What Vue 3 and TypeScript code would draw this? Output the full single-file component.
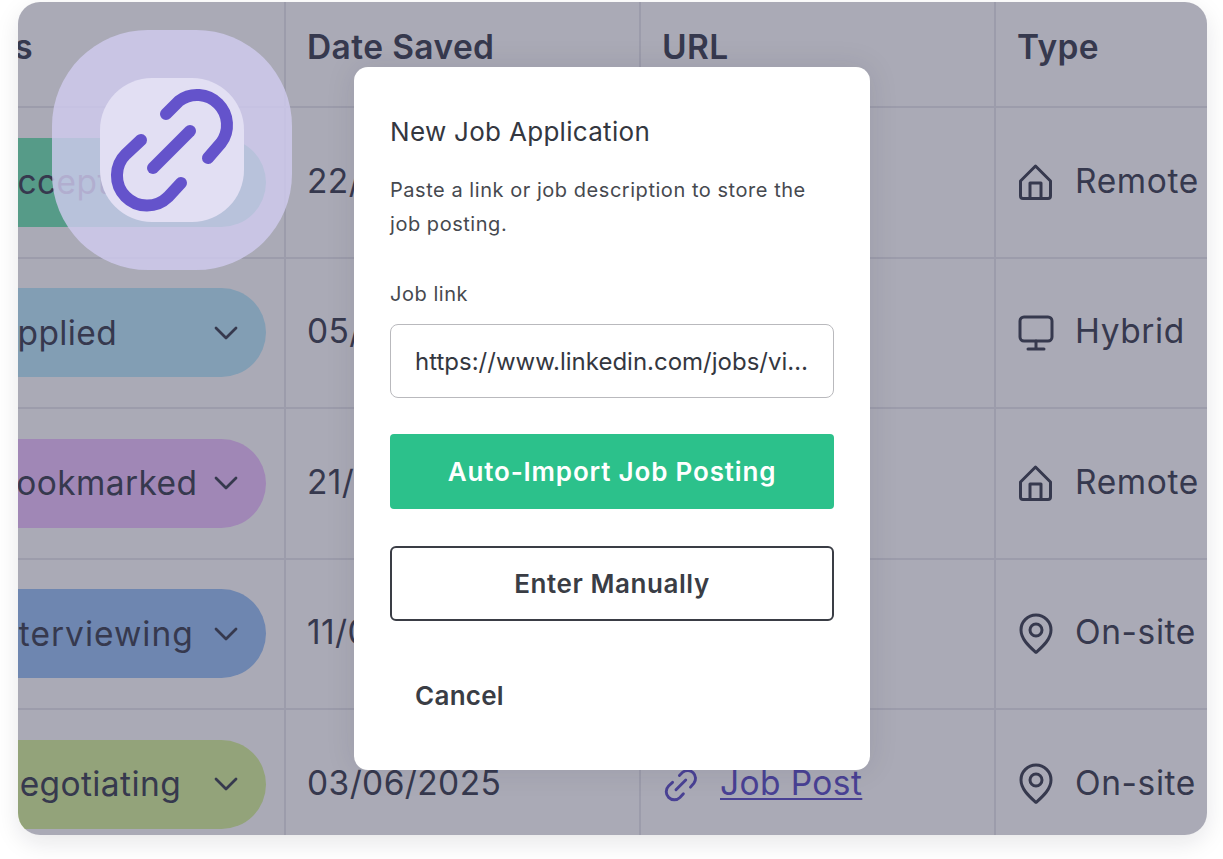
<script setup lang="ts">
type Row = { status: string; cls: string; date: string; kind: string; label: string }

const rows: Row[] = [
  { status: 'Accepted', cls: 'accepted', date: '22/05/2025', kind: 'home', label: 'Remote' },
  { status: 'Applied', cls: 'applied', date: '05/06/2025', kind: 'desk', label: 'Hybrid' },
  { status: 'Bookmarked', cls: 'bookmarked', date: '21/05/2025', kind: 'home', label: 'Remote' },
  { status: 'Interviewing', cls: 'interviewing', date: '11/06/2025', kind: 'pin', label: 'On-site' },
  { status: 'Negotiating', cls: 'negotiating', date: '03/06/2025', kind: 'pin', label: 'On-site' },
]
</script>

<template>
  <div class="page">
    <div class="card">
      <div class="grid">
        <div class="cell head status-head"><span>Status</span></div>
        <div class="cell head">Date Saved</div>
        <div class="cell head">URL</div>
        <div class="cell head last">Type</div>

        <template v-for="row in rows" :key="row.status">
          <div class="cell status-cell">
            <div class="pill" :class="row.cls">
              <span>{{ row.status }}</span>
              <svg class="chev" viewBox="0 0 24 14" fill="none" stroke="currentColor" stroke-width="2.800" stroke-linecap="round" stroke-linejoin="round">
                <path d="M2 2l10 10L22 2" />
              </svg>
            </div>
          </div>
          <div class="cell">{{ row.date }}</div>
          <div class="cell url">
            <svg class="mini-link" viewBox="0 0 144 144" fill="none" stroke="currentColor" stroke-width="11" stroke-linecap="round">
              <path d="M66 36L79 23A30 30 0 0 1 121 65L108 80" />
              <path d="M40 62L25 76A30 30 0 0 0 68 119L81 105" />
              <path d="M53 90L90 53" />
            </svg>
            <a class="job-link">Job Post</a>
          </div>
          <div class="cell last type">
            <svg v-if="row.kind === 'home'" class="type-icon" viewBox="0 0 36 38" fill="none" stroke="currentColor" stroke-width="3" stroke-linejoin="round" stroke-linecap="round">
              <path d="M2.500 18L17.500 3l15 15v15a2.500 2.500 0 0 1-2.500 2.500H5A2.500 2.500 0 0 1 2.500 33z" />
              <path d="M12 35.500V20h11v15.500" />
            </svg>
            <svg v-else-if="row.kind === 'desk'" class="type-icon" viewBox="0 0 36 38" fill="none" stroke="currentColor" stroke-width="3" stroke-linecap="round">
              <rect x="2" y="3" width="32" height="24" rx="4" />
              <path d="M18 27v7M10 35h16" />
            </svg>
            <svg v-else class="type-icon pin" viewBox="0 0 36 42" fill="none" stroke="currentColor" stroke-width="3" stroke-linejoin="round">
              <path d="M18 39.500C12 34 3 26.500 3 17a15 15 0 0 1 30 0c0 9.500-9 17-15 22.500z" />
              <circle cx="18" cy="17" r="6" />
            </svg>
            <span>{{ row.label }}</span>
          </div>
        </template>
      </div>
      <div class="scrim"></div>
    </div>

    <div class="badge">
      <div class="badge-inner">
        <svg viewBox="0 0 144 144" fill="none" stroke="#6453cb" stroke-width="12" stroke-linecap="round">
          <path d="M66 36L79 23A30 30 0 0 1 121 65L108 80" />
          <path d="M41 62L26 76A30 30 0 0 0 68 119L81 105" />
          <path d="M53 90L90 53" />
        </svg>
      </div>
    </div>

    <div class="modal">
      <h2>New Job Application</h2>
      <p class="desc">Paste a link or job description to store the job posting.</p>
      <label class="field-label">Job link</label>
      <div class="input">https://www.linkedin.com/jobs/view/3948210</div>
      <button class="btn primary">Auto-Import Job Posting</button>
      <button class="btn outline">Enter Manually</button>
      <button class="btn cancel">Cancel</button>
    </div>
  </div>
</template>

<style scoped>
.page {
  position: relative;
  width: 1223px;
  height: 859px;
  padding: 2px 16px 24px 18px;
  box-sizing: border-box;
  background: #fff;
  overflow: hidden;
  font-family: Inter, "Liberation Sans", sans-serif;
}

.card {
  position: relative;
  height: 833px;
  border-radius: 22px;
  overflow: hidden;
  background: #fff;
  box-shadow: 0 8px 24px rgba(20, 20, 40, 0.1);
}

.grid {
  display: grid;
  grid-template-columns: 268px 355px 355px 1fr;
  grid-template-rows: 106px repeat(5, 150.500px);
  color: #3f4352;
  font-size: 33.500px;
  letter-spacing: 0.4px;
}

.cell {
  display: flex;
  align-items: center;
  padding-left: 21px;
  padding-bottom: 3px;
  border-right: 2px solid #e8e8ed;
  border-bottom: 2px solid #e8e8ed;
  overflow: hidden;
  white-space: nowrap;
  min-width: 0;
}

.cell.last {
  border-right: none;
  padding-left: 21px;
}

.head {
  font-weight: 600;
  padding-bottom: 14px;
}

.status-head span {
  margin-left: -112px;
}

.status-cell {
  padding: 0;
  justify-content: flex-end;
}

.pill {
  flex: none;
  display: flex;
  align-items: center;
  justify-content: space-between;
  width: 300px;
  height: 89px;
  margin-right: 18px;
  padding: 0 28px 0 28px;
  box-sizing: border-box;
  border-radius: 45px;
}

.accepted { background: #73e6b3; }
.applied { background: #bdebfc; }
.bookmarked { background: #efc5ff; }
.interviewing { background: #9bc3f5; }
.negotiating { background: #d9f49b; }

.interviewing span {
  margin-left: -6px;
  letter-spacing: 1px;
}

.chev {
  width: 24px;
  height: 14px;
}

.url {
  gap: 20px;
}

.mini-link {
  width: 38px;
  height: 38px;
  margin-top: 4px;
  color: #5e50c6;
  flex: none;
}

.job-link {
  color: #5e50c6;
  text-decoration: underline;
  text-underline-offset: 3px;
  text-decoration-thickness: 2px;
}

.type {
  gap: 21px;
  letter-spacing: 0.600px;
}

.type-icon {
  width: 36px;
  height: 38px;
  margin-top: 3px;
  margin-left: 1px;
  flex: none;
}

.type-icon.pin {
  height: 42px;
}

.scrim {
  position: absolute;
  inset: 0;
  background: rgba(42, 42, 72, 0.4);
}

.badge {
  position: absolute;
  left: 52px;
  top: 30px;
  width: 240px;
  height: 240px;
  display: flex;
  align-items: center;
  justify-content: center;
  border-radius: 96px;
  background: rgba(209, 204, 240, 0.8);
}

.badge-inner {
  width: 144px;
  height: 144px;
  border-radius: 52px;
  background: #e2dff3;
}

.badge-inner svg {
  display: block;
  width: 144px;
  height: 144px;
}

.modal {
  position: absolute;
  left: 354px;
  top: 67px;
  width: 516px;
  height: 703px;
  padding: 47px 36px 0 36px;
  box-sizing: border-box;
  border-radius: 14px;
  background: #fff;
  box-shadow: 0 0 30px rgba(30, 30, 50, 0.1);
  color: #34373f;
  display: flex;
  flex-direction: column;
}

.modal h2 {
  margin: 0;
  font-size: 26px;
  line-height: 36px;
  font-weight: 400;
  letter-spacing: 0.300px;
}

.desc {
  margin: 23px 0 0;
  font-size: 20px;
  line-height: 34px;
  letter-spacing: 0.540px;
  color: #46494f;
}

.field-label {
  margin-top: 36px;
  font-size: 20px;
  line-height: 34px;
  letter-spacing: 0.540px;
  color: #46494f;
}

.input {
  margin-top: 13px;
  height: 74px;
  line-height: 74px;
  padding: 0 24px;
  box-sizing: border-box;
  border: 1.500px solid #b9b9bd;
  border-radius: 8px;
  font-size: 24px;
  color: #34373f;
  white-space: nowrap;
  overflow: hidden;
  text-overflow: ellipsis;
}

.btn {
  flex: none;
  height: 75px;
  font-family: inherit;
  font-size: 26px;
  font-weight: 600;
  border-radius: 4px;
  border: none;
  background: none;
  cursor: pointer;
}

.primary {
  margin-top: 36px;
  background: #2cc18b;
  color: #fff;
  letter-spacing: 0.830px;
}

.outline {
  margin-top: 37px;
  border: 2px solid #3a3d45;
  border-radius: 6px;
  color: #3a3d45;
  letter-spacing: 0.570px;
}

.cancel {
  margin-top: 37px;
  text-align: left;
  padding: 0 0 0 25px;
  color: #3a3d45;
  letter-spacing: 0.270px;
}
</style>
